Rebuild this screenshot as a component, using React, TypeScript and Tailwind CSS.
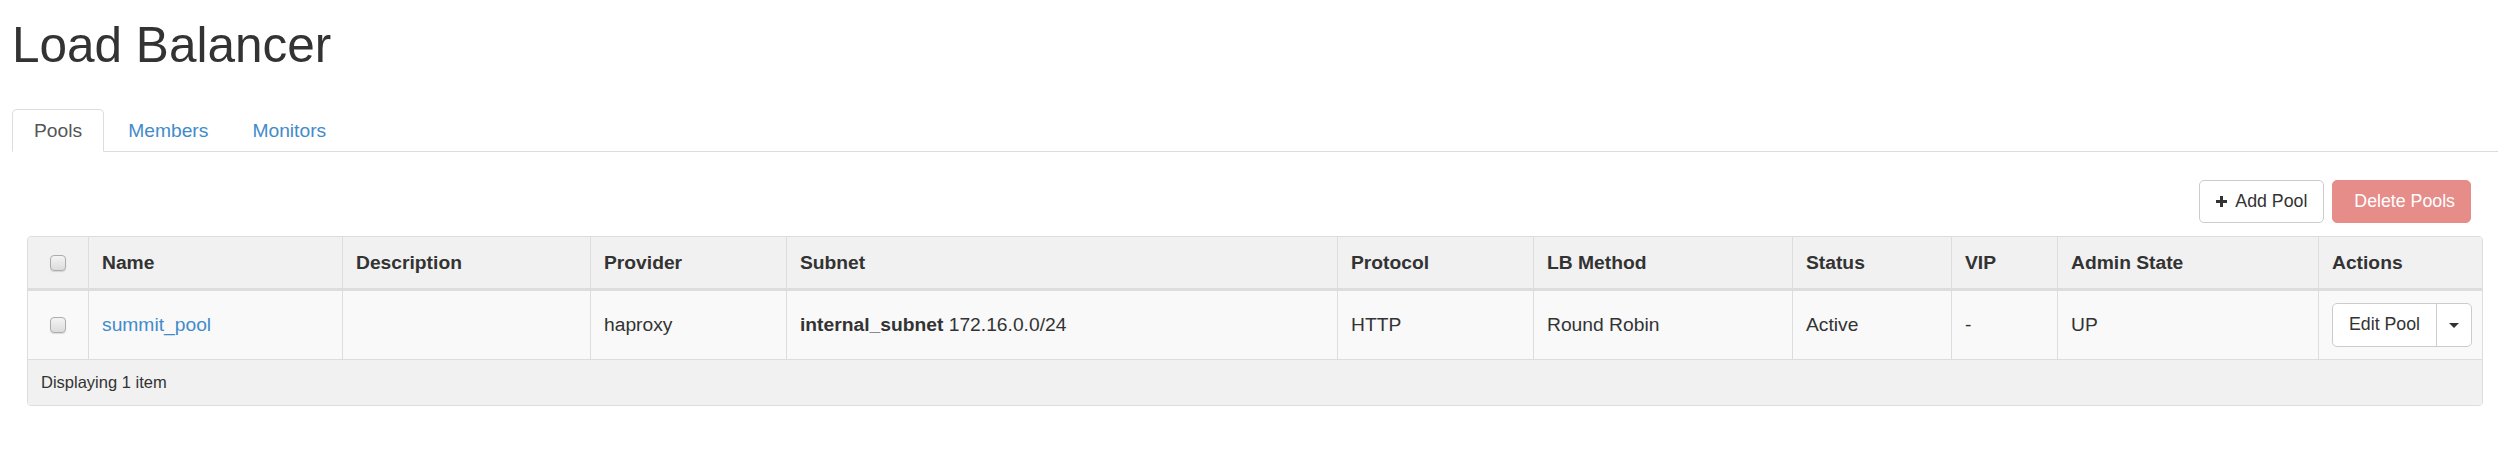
import React from 'react';

const cols =
  'grid grid-cols-[60px_254px_248px_196px_551px_196px_259px_159px_106px_261px_163px]';

const headers = [
  'Name',
  'Description',
  'Provider',
  'Subnet',
  'Protocol',
  'LB Method',
  'Status',
  'VIP',
  'Admin State',
  'Actions',
];

function Checkbox() {
  return (
    <span className="block w-[16px] h-[16px] rounded-[4px] border border-[#acacac] bg-gradient-to-b from-[#f4f4f4] to-[#dcdcdc] shadow-[0_1px_1px_rgba(0,0,0,0.12)]" />
  );
}

function Cell({ children, bold }: { children?: React.ReactNode; bold?: boolean }) {
  return (
    <div
      className={`flex items-center whitespace-nowrap border-l border-[#ddd] px-[13px] ${bold ? 'font-bold' : ''}`}
    >
      {children}
    </div>
  );
}

export default function App() {
  return (
    <div className="min-h-screen bg-white font-['Liberation_Sans',Arial,sans-serif] text-[#333] text-[19.25px] leading-[27.5px]">
      <h1 className="px-[12px] pt-[18px] text-[49.5px] leading-[54px] font-normal">Load Balancer</h1>

      {/* tabs */}
      <div className="mx-[12px] mt-[37px] flex border-b border-[#ddd]">
        <div className="-mb-px mr-[3px] rounded-t-[5px] border border-[#ddd] border-b-white bg-white px-[21px] py-[7px] leading-[27px] text-[#555]">
          Pools
        </div>
        <div className="-mb-px mr-[2px] border border-transparent px-[20px] py-[7px] leading-[27px] text-[#428bca]">
          Members
        </div>
        <div className="-mb-px mr-[3px] border border-transparent px-[20px] py-[7px] leading-[27px] text-[#428bca]">
          Monitors
        </div>
      </div>

      <div className="mx-[27px] mt-[28px]">
        {/* table actions */}
        <div className="flex justify-end gap-[8px] pr-[12px] text-[17.75px]">
          <button className="flex h-[43px] items-center gap-[8px] rounded-[5px] border border-[#ccc] bg-white px-[16px] text-[#333]">
            <svg width="11" height="11" viewBox="0 0 11 11">
              <path d="M4 0h3v4h4v3H7v4H4V7H0V4h4z" fill="#333" />
            </svg>
            Add Pool
          </button>
          <button className="flex h-[43px] items-center rounded-[5px] border border-[#e68d8a] bg-[#e68d8a] pl-[21px] pr-[15px] text-white">
            Delete Pools
          </button>
        </div>

        {/* table */}
        <div className="mt-[13px] overflow-hidden rounded-[4px] border border-[#ddd]">
          <div className={`${cols} h-[54px] border-b-[3px] border-[#ddd] bg-[#f1f1f1]`}>
            <div className="flex items-center justify-center">
              <Checkbox />
            </div>
            {headers.map((h) => (
              <Cell key={h} bold>
                {h}
              </Cell>
            ))}
          </div>

          <div className={`${cols} h-[69px] border-b border-[#ddd] bg-[#f9f9f9]`}>
            <div className="flex items-center justify-center">
              <Checkbox />
            </div>
            <Cell>
              <span className="text-[#428bca]">summit_pool</span>
            </Cell>
            <Cell />
            <Cell>haproxy</Cell>
            <Cell>
              <span>
                <b>internal_subnet</b> 172.16.0.0/24
              </span>
            </Cell>
            <Cell>HTTP</Cell>
            <Cell>Round Robin</Cell>
            <Cell>Active</Cell>
            <Cell>-</Cell>
            <Cell>UP</Cell>
            <Cell>
              <div className="flex h-[44px] shrink-0 rounded-[5px] border border-[#ccc] bg-white text-[17.75px]">
                <span className="flex items-center px-[16px]">Edit Pool</span>
                <span className="flex w-[35px] items-center justify-center border-l border-[#ccc]">
                  <svg width="10" height="5" viewBox="0 0 10 5">
                    <path d="M0 0h10L5 5z" fill="#333" />
                  </svg>
                </span>
              </div>
            </Cell>
          </div>

          <div className="flex h-[45px] items-center bg-[#f1f1f1] px-[13px] text-[16.5px]">
            Displaying 1 item
          </div>
        </div>
      </div>
    </div>
  );
}
